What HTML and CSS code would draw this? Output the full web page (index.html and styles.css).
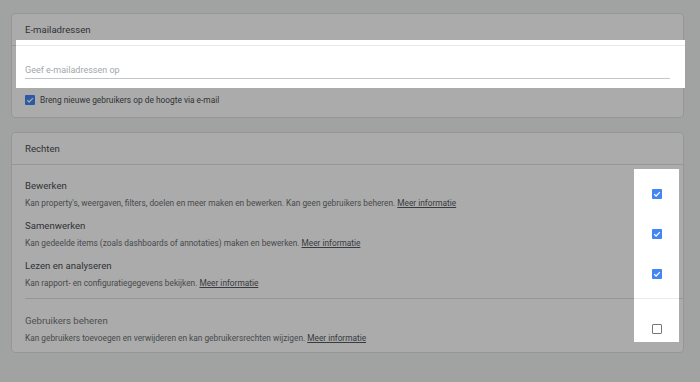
FILE: index.html
```html
<!DOCTYPE html>
<html lang="nl">
<head>
<meta charset="utf-8">
<title>Gebruikers toevoegen</title>
<link rel="stylesheet" href="styles.css">
</head>
<body>
<div class="page">
  <section class="card">
    <div class="card-header">E-mailadressen</div>
    <div class="card-body">
      <div class="spot spot-input"></div>
      <input class="email-input raised" type="text" placeholder="Geef e-mailadressen op">
      <label class="notify">
        <span class="cb checked"><svg viewBox="0 0 10 10" width="10" height="10"><path d="M2.2 5.1 L4.1 7 L7.9 3.1" fill="none" stroke="#fff" stroke-width="1.3"/></svg></span>
        <span>Breng nieuwe gebruikers op de hoogte via e-mail</span>
      </label>
    </div>
  </section>

  <section class="card card-rights">
    <div class="card-header">Rechten</div>
    <div class="rights-body">
      <div class="spot spot-checks"></div>
      <div class="right-row">
        <div class="right-text">
          <div class="right-title">Bewerken</div>
          <div class="right-desc">Kan property's, weergaven, filters, doelen en meer maken en bewerken. Kan geen gebruikers beheren. <a href="#">Meer informatie</a></div>
        </div>
        <div class="right-check"><span class="cb checked raised"><svg viewBox="0 0 10 10" width="10" height="10"><path d="M2.2 5.1 L4.1 7 L7.9 3.1" fill="none" stroke="#fff" stroke-width="1.3"/></svg></span></div>
      </div>
      <div class="right-row">
        <div class="right-text">
          <div class="right-title">Samenwerken</div>
          <div class="right-desc">Kan gedeelde items (zoals dashboards of annotaties) maken en bewerken. <a href="#">Meer informatie</a></div>
        </div>
        <div class="right-check"><span class="cb checked raised"><svg viewBox="0 0 10 10" width="10" height="10"><path d="M2.2 5.1 L4.1 7 L7.9 3.1" fill="none" stroke="#fff" stroke-width="1.3"/></svg></span></div>
      </div>
      <div class="right-row">
        <div class="right-text">
          <div class="right-title">Lezen en analyseren</div>
          <div class="right-desc">Kan rapport- en configuratiegegevens bekijken. <a href="#">Meer informatie</a></div>
        </div>
        <div class="right-check"><span class="cb checked raised"><svg viewBox="0 0 10 10" width="10" height="10"><path d="M2.2 5.1 L4.1 7 L7.9 3.1" fill="none" stroke="#fff" stroke-width="1.3"/></svg></span></div>
      </div>
      <div class="rights-divider"></div>
      <div class="right-row">
        <div class="right-text">
          <div class="right-title muted">Gebruikers beheren</div>
          <div class="right-desc">Kan gebruikers toevoegen en verwijderen en kan gebruikersrechten wijzigen. <a href="#">Meer informatie</a></div>
        </div>
        <div class="right-check"><span class="cb raised"></span></div>
      </div>
    </div>
  </section>
</div>
<div class="overlay"></div>
</body>
</html>
```
FILE: styles.css
```css
* { box-sizing: border-box; }

html, body {
  margin: 0;
  padding: 0;
  background: #f1f3f4;
  font-family: Roboto, "Liberation Sans", Arial, sans-serif;
  color: #202124;
}

.page {
  padding: 13px 16px 0 11px;
}

.card {
  position: relative;
  background: #fff;
  border: 1px solid #e0e0e0;
  border-radius: 4px;
}

.card-rights {
  margin-top: 14px;
}

.card-header {
  height: 32px;
  padding-left: 13px;
  border-bottom: 1px solid #e0e0e0;
  font-size: 9.6px;
  line-height: 31px;
  color: #4a4d51;
}

.card-body {
  padding: 14px 13px 11px 13px;
}

.email-input {
  display: block;
  width: 100%;
  margin: 0;
  padding: 4px 0 2px 0;
  border: none;
  border-bottom: 1px solid #c4c7ca;
  outline: none;
  background: transparent;
  font-family: Roboto, "Liberation Sans", Arial, sans-serif;
  font-size: 9px;
  line-height: 12px;
  height: 19px;
  color: #202124;
}

.email-input::placeholder {
  color: #a3a7ab;
}

.notify {
  display: flex;
  align-items: center;
  gap: 5px;
  margin-top: 15px;
  height: 12px;
  font-size: 8.35px;
  line-height: 12px;
  color: #4a4d51;
}

.cb {
  display: inline-flex;
  width: 10px;
  height: 10px;
  flex: none;
  border-radius: 1px;
  border: 1.5px solid #75797e;
  background: #fff;
}

.cb.checked {
  border: none;
  background: #4285f4;
}

.cb svg { display: block; }

.rights-body {
  padding: 14px 0 8px 0;
}

.right-row {
  display: flex;
  align-items: center;
  height: 30px;
  margin-bottom: 10px;
}

.right-row:last-child { margin-bottom: 0; }

.right-text {
  flex: 1;
  padding-left: 13px;
}

.right-title {
  font-size: 9.6px;
  line-height: 14px;
  color: #4a4d51;
}

.right-title.muted {
  color: #74787c;
}

.right-desc {
  margin-top: 4px;
  font-size: 8.3px;
  line-height: 12px;
  color: #6b6f73;
  white-space: nowrap;
}

.right-desc a {
  color: #55595d;
  text-decoration: underline;
}

.right-check {
  width: 45px;
  margin-right: 4px;
  display: flex;
  justify-content: center;
}

.rights-divider {
  height: 1px;
  background: #e0e0e0;
  margin: -1px 0 15px 13px;
}

.overlay {
  position: fixed;
  inset: 0;
  background: rgba(0, 0, 0, 0.33);
  z-index: 10;
}

.spot {
  position: absolute;
  background: #fff;
  z-index: 11;
}

.spot-input {
  left: 4px;
  top: 26px;
  width: 669px;
  height: 48px;
}

.spot-input::before {
  content: "";
  position: absolute;
  left: 0;
  right: 0;
  top: 5px;
  height: 1px;
  background: #e8e8e8;
}

.spot-checks {
  left: 622px;
  top: 36px;
  width: 45px;
  height: 173px;
}

.spot-checks::before {
  content: "";
  position: absolute;
  left: 0;
  right: 0;
  top: 129px;
  height: 1px;
  background: #ececec;
}

.raised {
  position: relative;
  z-index: 12;
}
```
